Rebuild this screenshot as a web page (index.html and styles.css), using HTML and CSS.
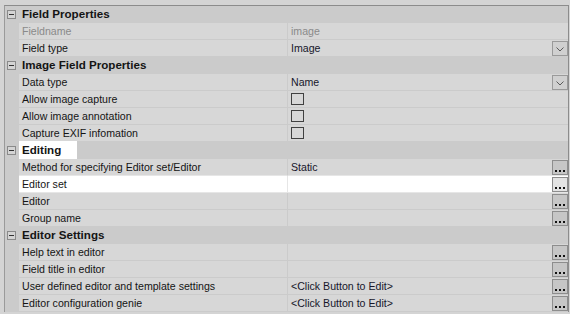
FILE: index.html
```html
<!DOCTYPE html>
<html>
<head>
<meta charset="utf-8">
<link rel="stylesheet" href="styles.css">
</head>
<body>
<div class="wrap">
  <div class="grid">
    <div class="cat"><span class="gut"><span class="tog"></span></span><span class="cat-label">Field Properties</span></div>
    <div class="row ro"><span class="gut"></span><span class="name">Fieldname</span><span class="val">image</span></div>
    <div class="row"><span class="gut"></span><span class="name">Field type</span><span class="val"><span class="txt">Image</span><span class="btn drop"><svg width="8" height="5" viewBox="0 0 8 5"><polyline points="0.5,0.5 4,4 7.5,0.5" fill="none" stroke="#5a5a5a" stroke-width="1"/></svg></span></span></div>
    <div class="cat"><span class="gut"><span class="tog"></span></span><span class="cat-label">Image Field Properties</span></div>
    <div class="row"><span class="gut"></span><span class="name">Data type</span><span class="val"><span class="txt">Name</span><span class="btn drop"><svg width="8" height="5" viewBox="0 0 8 5"><polyline points="0.5,0.5 4,4 7.5,0.5" fill="none" stroke="#5a5a5a" stroke-width="1"/></svg></span></span></div>
    <div class="row"><span class="gut"></span><span class="name">Allow image capture</span><span class="val"><span class="chk"></span></span></div>
    <div class="row"><span class="gut"></span><span class="name">Allow image annotation</span><span class="val"><span class="chk"></span></span></div>
    <div class="row"><span class="gut"></span><span class="name">Capture EXIF infomation</span><span class="val"><span class="chk"></span></span></div>
    <div class="cat"><span class="gut"><span class="tog"></span></span><span class="cat-label cat-sel">Editing</span></div>
    <div class="row above-sel"><span class="gut"></span><span class="name">Method for specifying Editor set/Editor</span><span class="val"><span class="txt">Static</span><span class="btn ell"><i></i><i></i><i></i></span></span></div>
    <div class="row sel"><span class="gut"></span><span class="name">Editor set</span><span class="val"><span class="txt"></span><span class="btn ell"><i></i><i></i><i></i></span></span></div>
    <div class="row"><span class="gut"></span><span class="name">Editor</span><span class="val"><span class="txt"></span><span class="btn ell"><i></i><i></i><i></i></span></span></div>
    <div class="row"><span class="gut"></span><span class="name">Group name</span><span class="val"><span class="txt"></span><span class="btn ell"><i></i><i></i><i></i></span></span></div>
    <div class="cat"><span class="gut"><span class="tog"></span></span><span class="cat-label">Editor Settings</span></div>
    <div class="row"><span class="gut"></span><span class="name">Help text in editor</span><span class="val"><span class="txt"></span><span class="btn ell"><i></i><i></i><i></i></span></span></div>
    <div class="row"><span class="gut"></span><span class="name">Field title in editor</span><span class="val"><span class="txt"></span><span class="btn ell"><i></i><i></i><i></i></span></span></div>
    <div class="row"><span class="gut"></span><span class="name">User defined editor and template settings</span><span class="val"><span class="txt">&lt;Click Button to Edit&gt;</span><span class="btn ell"><i></i><i></i><i></i></span></span></div>
    <div class="row"><span class="gut"></span><span class="name">Editor configuration genie</span><span class="val"><span class="txt">&lt;Click Button to Edit&gt;</span><span class="btn ell"><i></i><i></i><i></i></span></span></div>
  </div>
</div>
</body>
</html>
```
FILE: styles.css
```css
* { box-sizing: border-box; }
html, body { margin: 0; padding: 0; }
body {
  background: #d4d4d4;
  font-family: "Liberation Sans", Arial, sans-serif;
  font-size: 10.6px;
  color: #141414;
  width: 570px;
  height: 314px;
  overflow: hidden;
}
.wrap { padding: 5px 0 0 4px; }
.grid {
  width: 565px;
  border-top: 1px solid #8c8c8c;
  border-left: 1px solid #9a9a9a;
  border-right: 1px solid #8c8c8c;
  background: #cbcbcb;
}
.cat, .row {
  display: flex;
  height: 17px;
}
.gut {
  width: 14px;
  flex: none;
  background: #cbcbcb;
  position: relative;
}
.tog {
  display: block;
  width: 9px;
  height: 9px;
  margin: 4px 0 0 2px;
  border: 1px solid #8a8a8a;
  background: #d4d4d4;
  position: relative;
}
.tog::after {
  content: "";
  position: absolute;
  left: 1px;
  top: 3px;
  width: 5px;
  height: 1px;
  background: #333;
}
.cat-label {
  font-weight: bold;
  font-size: 11.6px;
  line-height: 16px;
  padding-left: 3px;
  color: #141414;
}
.cat-sel {
  position: relative;
  background: #fff;
  height: 18px;
  margin-top: -1px;
  line-height: 18px;
  padding-right: 16px;
}
.name {
  width: 269px;
  flex: none;
  background: #d7d7d7;
  border-right: 1px solid #cbcbcb;
  border-bottom: 1px solid #cbcbcb;
  padding-left: 3px;
  line-height: 16px;
  white-space: nowrap;
  overflow: hidden;
}
.val {
  flex: 1;
  display: flex;
  align-items: flex-start;
  background: #d7d7d7;
  border-bottom: 1px solid #cbcbcb;
  padding-left: 3px;
  line-height: 16px;
  color: #16162a;
}
.txt { flex: 1; }
.ro .name, .ro .val { color: #8a8a8a; }
.chk {
  width: 13px;
  height: 12px;
  margin-top: 2px;
  border: 1px solid #404040;
}
.btn {
  width: 16px;
  height: 15px;
  margin-top: 1px;
  flex: none;
  border: 1px solid #8d8d8d;
  background: #c6c6c6;
  display: flex;
  justify-content: center;
}
.drop {
  background: #d0d0d0;
  border-color: #9a9a9a;
  align-items: center;
}
.drop svg { display: block; margin-top: 2px; }
.ell {
  align-items: flex-end;
  gap: 2px;
  padding-bottom: 2px;
}
.ell i {
  display: block;
  width: 2px;
  height: 2px;
  background: #111;
}
.sel .name, .sel .val {
  background: #fff;
  border-bottom-color: #e6e6e6;
}
.sel .name { border-right-color: #e6e6e6; }
.sel .btn { background: #e3e3e3; }
.above-sel .name, .above-sel .val { border-bottom-color: #e6e6e6; }
```
